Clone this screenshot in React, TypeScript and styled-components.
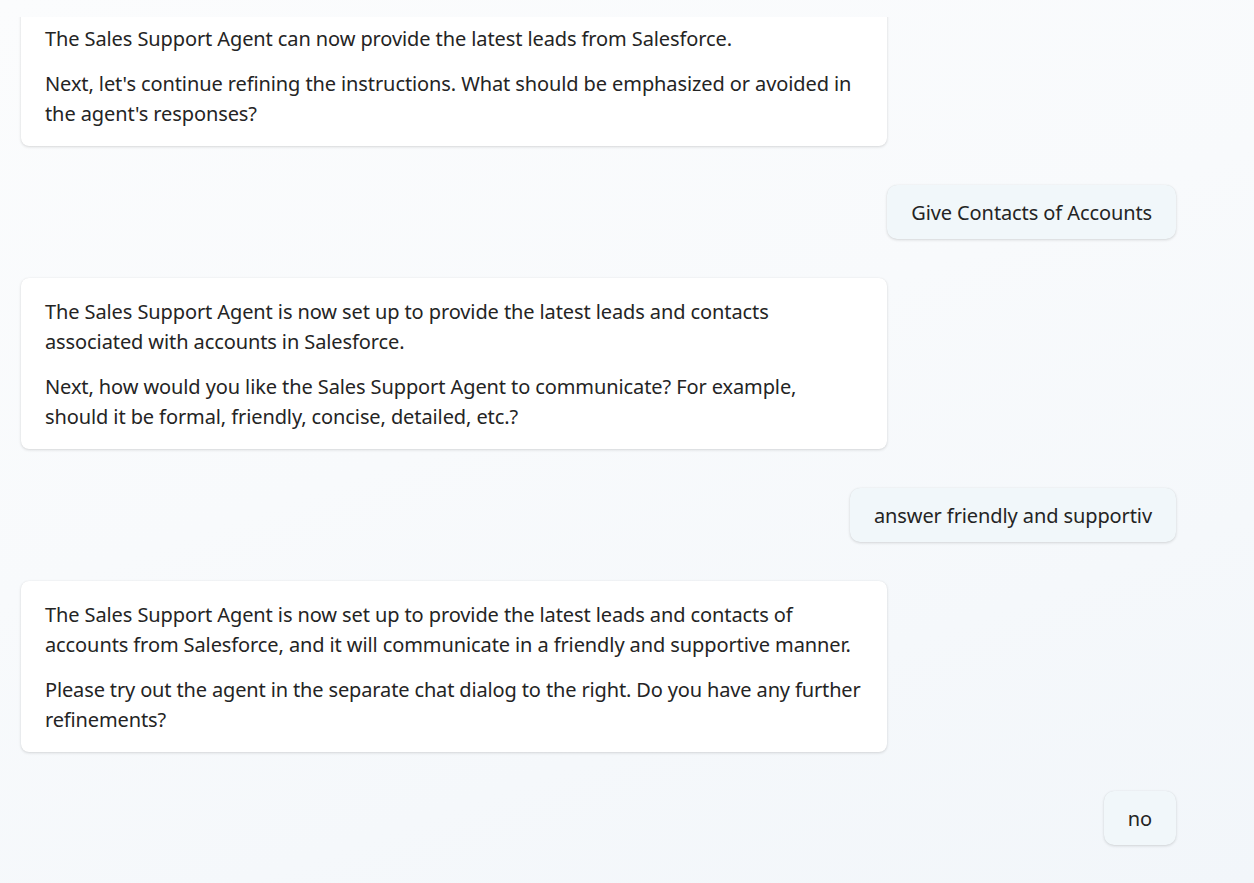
import React from "react";
import styled, { createGlobalStyle } from "styled-components";

const Global = createGlobalStyle`
  html, body { margin: 0; padding: 0; height: 100%; }
  body {
    background: linear-gradient(160deg, #fbfcfd 0%, #f8fafc 45%, #f2f6fa 100%);
    font-family: "Noto Sans", "Open Sans", sans-serif;
    color: #242424;
  }
  #root { height: 100%; }
`;

const Page = styled.div`
  height: 883px;
  box-sizing: border-box;
  padding-top: 17px;
  display: flex;
  flex-direction: column;
`;

const Scroller = styled.div`
  flex: 1;
  min-height: 0;
  overflow: hidden;
  display: flex;
  flex-direction: column;
  justify-content: flex-end;
  gap: 39px;
  padding: 0 78px 38px 21px;
`;

const Row = styled.div<{ $mine?: boolean }>`
  display: flex;
  flex-shrink: 0;
  justify-content: ${(p) => (p.$mine ? "flex-end" : "flex-start")};
`;

const AgentCard = styled.div`
  width: 75%;
  box-sizing: border-box;
  background: #ffffff;
  border-radius: 8px;
  box-shadow: 0 1px 3px rgba(0, 0, 0, 0.14), 0 0 1px rgba(0, 0, 0, 0.08);
  padding: 19px 24px 17px;
  font-size: 20px;
  line-height: 30px;
  letter-spacing: -0.1px;
`;

const Para = styled.p<{ $tight?: boolean }>`
  margin: 0;
  letter-spacing: ${(p) => (p.$tight ? "-0.14px" : "-0.1px")};
  & + & { margin-top: 15px; }
`;

const UserBubble = styled.div`
  background: #f1f7fa;
  border-radius: 10px;
  box-shadow: 0 1px 3px rgba(0, 0, 0, 0.14), 0 0 1px rgba(0, 0, 0, 0.08);
  padding: 13px 24px 11px;
  font-size: 20px;
  line-height: 30px;
  letter-spacing: -0.1px;
  white-space: nowrap;
`;

type Msg = { mine: boolean; paras: { text: string; tight?: boolean }[] };

const messages: Msg[] = [
  {
    mine: false,
    paras: [
      { text: "The Sales Support Agent can now provide the latest leads from Salesforce." },
      { text: "Next, let's continue refining the instructions. What should be emphasized or avoided in the agent's responses?" },
    ],
  },
  { mine: true, paras: [{ text: "Give Contacts of Accounts" }] },
  {
    mine: false,
    paras: [
      { text: "The Sales Support Agent is now set up to provide the latest leads and contacts associated with accounts in Salesforce." },
      { text: "Next, how would you like the Sales Support Agent to communicate? For example, should it be formal, friendly, concise, detailed, etc.?" },
    ],
  },
  { mine: true, paras: [{ text: "answer friendly and supportiv" }] },
  {
    mine: false,
    paras: [
      { text: "The Sales Support Agent is now set up to provide the latest leads and contacts of accounts from Salesforce, and it will communicate in a friendly and supportive manner." },
      { text: "Please try out the agent in the separate chat dialog to the right. Do you have any further refinements?", tight: true },
    ],
  },
  { mine: true, paras: [{ text: "no" }] },
];

export default function App() {
  return (
    <>
      <Global />
      <Page>
        <Scroller>
          {messages.map((m, i) => (
            <Row key={i} $mine={m.mine}>
              {m.mine ? (
                <UserBubble>{m.paras[0].text}</UserBubble>
              ) : (
                <AgentCard>
                  {m.paras.map((p, j) => (
                    <Para key={j} $tight={p.tight}>
                      {p.text}
                    </Para>
                  ))}
                </AgentCard>
              )}
            </Row>
          ))}
        </Scroller>
      </Page>
    </>
  );
}
